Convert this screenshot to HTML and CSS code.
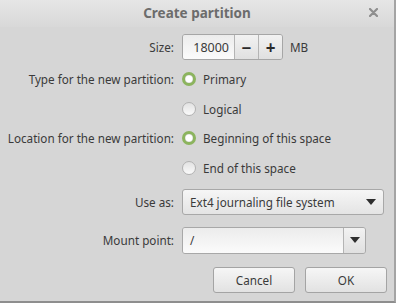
FILE: index.html
```html
<!DOCTYPE html>
<html>
<head>
<meta name="viewport" content="width=device-width, initial-scale=1">
<link rel="stylesheet" href="styles.css">
</head>
<body>

<div class="dialog">
  <div class="titlebar">
    <span class="title">Create partition</span>
    <svg class="close" width="9" height="9" viewBox="0 0 9 9"><path d="M1 1L8 8M8 1L1 8" stroke="#8e8e8e" stroke-width="2.2" stroke-linecap="round"/></svg>
  </div>

  <div class="form">
    <label class="lbl">Size:</label>
    <div class="ctl">
      <div class="spin">
        <span class="spin__entry">18000</span>
        <span class="spin__btn">&minus;</span>
        <span class="spin__btn">+</span>
      </div>
      <span class="unit">MB</span>
    </div>

    <label class="lbl">Type for the new partition:</label>
    <div class="ctl radio"><span class="radio__dot on"></span>Primary</div>

    <span></span>
    <div class="ctl radio"><span class="radio__dot"></span>Logical</div>

    <label class="lbl">Location for the new partition:</label>
    <div class="ctl radio"><span class="radio__dot on"></span>Beginning of this space</div>

    <span></span>
    <div class="ctl radio"><span class="radio__dot"></span>End of this space</div>

    <label class="lbl">Use as:</label>
    <div class="ctl">
      <div class="combo">
        <span>Ext4 journaling file system</span>
        <svg width="10" height="6" viewBox="0 0 10 6"><path d="M0 0H10L5 6Z" fill="#2e2e2e"/></svg>
      </div>
    </div>

    <label class="lbl">Mount point:</label>
    <div class="ctl">
      <div class="entrycombo">
        <span class="entrycombo__text">/</span>
        <span class="entrycombo__btn"><svg width="10" height="6" viewBox="0 0 10 6"><path d="M0 0H10L5 6Z" fill="#2e2e2e"/></svg></span>
      </div>
    </div>
  </div>

  <div class="actions">
    <button class="btn">Cancel</button>
    <button class="btn">OK</button>
  </div>
</div>

</body>
</html>
```

FILE: styles.css
```css
* {box-sizing: border-box;}

body {
  margin: 0;
  background: #d6d6d6;
  font-family: "Noto Sans", sans-serif;
  font-size: 11.7px;
  color: #3a3a3a;
}

.dialog {
  width: 396px;
  height: 303px;
  background: #d6d6d6;
  border-right: 2px solid #a4a4a4;
  border-bottom: 2px solid #8e8e8e;
}

/* window title */
.titlebar {
  position: relative;
  height: 27px;
  display: flex;
  align-items: center;
  justify-content: center;
  background: linear-gradient(#e6e6e6, #d8d8d8);
}
.title {
  font-weight: bold;
  font-size: 13.5px;
  color: #6c6c6c;
  margin-top: -2px;
}
.close {
  position: absolute;
  right: 16px;
  top: 8px;
}

/* label / control grid */
.form {
  display: grid;
  grid-template-columns: 166px 1fr;
  grid-template-rows: 30px 34px 26px 32px 28px 40px 36px;
  column-gap: 8px;
  padding: 5px 0 0 8px;
}
.lbl {
  justify-self: end;
  align-self: center;
  white-space: nowrap;
}
.ctl {
  display: flex;
  align-items: center;
  white-space: nowrap;
}

.spin {
  display: flex;
  width: 101px;
  height: 26px;
  border: 1px solid #a6a6a6;
  border-radius: 3px;
  overflow: hidden;
}
.spin__entry {
  flex: 1;
  display: flex;
  align-items: center;
  justify-content: flex-end;
  padding-right: 5px;
  font-size: 12.5px;
  background: linear-gradient(#ececec, #fbfbfb);
}
.spin__btn {
  width: 24px;
  display: flex;
  align-items: center;
  justify-content: center;
  border-left: 1px solid #b4b4b4;
  background: linear-gradient(#f2f2f2, #e0e0e0);
  font-weight: bold;
  font-size: 17px;
  color: #2a2a2a;
}
.unit {
  margin-left: 7px;
}

.radio {
  gap: 7px;
}
.radio__dot {
  width: 14px;
  height: 14px;
  border-radius: 50%;
  border: 1px solid #b2b2b2;
  background: linear-gradient(#e2e2e2, #fafafa);
}
.radio__dot.on {
  border: 3px solid #8cb45e;
  background: radial-gradient(circle, #ffffff 0 3px, #d8d8d8 4px);
}

.combo {
  width: 202px;
  height: 26px;
  display: flex;
  align-items: center;
  justify-content: space-between;
  padding: 0 7px 0 7px;
  border: 1px solid #a8a8a8;
  border-radius: 3px;
  background: linear-gradient(#f6f6f6, #e4e4e4);
}

.entrycombo {
  width: 184px;
  height: 27px;
  display: flex;
  border: 1px solid #a8a8a8;
  border-radius: 3px;
  overflow: hidden;
}
.entrycombo__text {
  flex: 1;
  display: flex;
  align-items: center;
  padding-left: 7px;
  background: linear-gradient(#ececec, #fbfbfb);
}
.entrycombo__btn {
  width: 22px;
  display: flex;
  align-items: center;
  justify-content: center;
  border-left: 1px solid #b4b4b4;
  background: linear-gradient(#f2f2f2, #e0e0e0);
}

/* bottom buttons */
.actions {
  display: flex;
  justify-content: flex-end;
  gap: 10px;
  padding: 9px 7px 0 0;
}
.btn {
  width: 82px;
  height: 26px;
  font: inherit;
  color: #3a3a3a;
  border: 1px solid #a4a4a4;
  border-radius: 3px;
  background: linear-gradient(#f6f6f6, #e2e2e2);
}
```
